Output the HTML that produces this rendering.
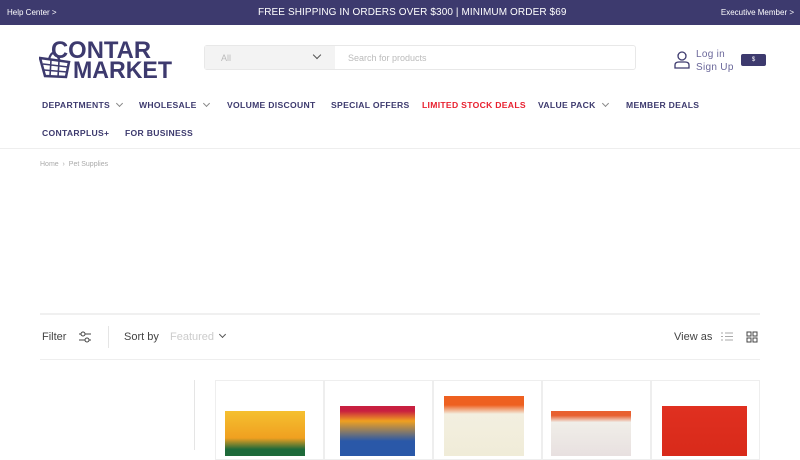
<!DOCTYPE html>
<html><head><meta charset="utf-8"><style>
*{margin:0;padding:0;box-sizing:border-box}
body{width:800px;height:450px;overflow:hidden;background:#fff;font-family:"Liberation Sans",sans-serif;position:relative;color:#3d3a6e}
.a{position:absolute}
.top{left:0;top:0;width:800px;height:25px;background:#3d3a6e;color:#fff}
.nav{font-weight:bold;font-size:8.6px;color:#3d3a6e;letter-spacing:.3px;white-space:nowrap}
.chev{display:inline-block;width:5px;height:5px;border-right:1px solid #888;border-bottom:1px solid #888;transform:rotate(45deg);margin-left:7px;position:relative;top:-2px}
.card{top:380px;width:109px;height:80px;border:1px solid #eee}
</style></head><body>
<div class="a top">
<div class="a" style="left:7px;top:8px;font-size:8px">Help Center &gt;</div>
<div class="a" style="left:258px;top:7px;font-size:10px;letter-spacing:.1px;width:285px;white-space:nowrap">FREE SHIPPING IN ORDERS OVER $300 | MINIMUM ORDER $69</div>
<div class="a" style="right:6px;top:8px;font-size:8px">Executive Member &gt;</div>
</div>
<!-- logo -->
<svg class="a" style="left:39px;top:38px" width="135" height="42" viewBox="0 0 135 42">
<text x="12" y="20" font-family="Liberation Sans" font-weight="bold" font-size="24" fill="#3d3a6e" textLength="100" lengthAdjust="spacingAndGlyphs">CONTAR</text>
<text x="34" y="40" font-family="Liberation Sans" font-weight="bold" font-size="24" fill="#3d3a6e" textLength="99" lengthAdjust="spacingAndGlyphs">MARKET</text>
<path d="M1 20 L30 24 L27 39 L6 38 Z" fill="none" stroke="#3d3a6e" stroke-width="2.5"/>
<path d="M4 26 L29 29 M5 32 L28 34 M12 22 L11 38 M20 23 L19 39" stroke="#3d3a6e" stroke-width="1.6"/>
<path d="M10 21 Q14 8 21 23" fill="none" stroke="#3d3a6e" stroke-width="2.2"/>
</svg>
<div class="a" style="left:204px;top:45px;width:432px;height:25px;border:1px solid #e8e8e8;border-radius:3px"></div>
<div class="a" style="left:205px;top:46px;width:130px;height:23px;background:#f3f3f3"></div>
<div class="a" style="left:221px;top:53px;font-size:9px;color:#bbb">All</div>
<div class="a" style="left:314px;top:52px;width:6px;height:6px;border-right:1.3px solid #555;border-bottom:1.3px solid #555;transform:rotate(45deg)"></div>
<div class="a" style="left:348px;top:53px;font-size:9px;color:#bbb">Search for products</div>
<svg class="a" style="left:673px;top:51px" width="18" height="18" viewBox="0 0 18 18"><circle cx="9" cy="5" r="4" fill="none" stroke="#3d3a6e" stroke-width="1.3"/><path d="M2 17 V14 Q2 11 6 11 H12 Q16 11 16 14 V17 Z" fill="none" stroke="#3d3a6e" stroke-width="1.3"/></svg>
<div class="a" style="left:696px;top:48px;font-size:10px;color:#6a679a;line-height:13px;letter-spacing:.3px">Log in<br>Sign Up</div>
<div class="a" style="left:741px;top:54px;width:25px;height:12px;background:#3d3a6e;border-radius:2px;color:#fff;font-size:6px;text-align:center;line-height:12px">$</div>
<div class="a nav" style="left:42px;top:100px">DEPARTMENTS<span class="chev"></span></div>
<div class="a nav" style="left:139px;top:100px">WHOLESALE<span class="chev"></span></div>
<div class="a nav" style="left:227px;top:100px">VOLUME DISCOUNT</div>
<div class="a nav" style="left:331px;top:100px">SPECIAL OFFERS</div>
<div class="a nav" style="left:422px;top:100px;color:#e8202f">LIMITED STOCK DEALS</div>
<div class="a nav" style="left:538px;top:100px">VALUE PACK<span class="chev"></span></div>
<div class="a nav" style="left:626px;top:100px">MEMBER DEALS</div>
<div class="a nav" style="left:42px;top:128px">CONTARPLUS+</div>
<div class="a nav" style="left:125px;top:128px">FOR BUSINESS</div>
<div class="a" style="left:0;top:148px;width:800px;height:1px;background:#eee"></div>
<div class="a" style="left:40px;top:161px;font-size:7px;color:#aaa">Home &nbsp;›&nbsp; Pet Supplies</div>
<div class="a" style="left:40px;top:313px;width:720px;height:2px;background:#f0f0f0"></div>
<div class="a" style="left:42px;top:331px;font-size:11px;color:#444">Filter</div>
<svg class="a" style="left:78px;top:331px" width="14" height="12" viewBox="0 0 14 12"><path d="M1 3H13M1 9H13" stroke="#444"/><circle cx="5" cy="3" r="2" fill="#fff" stroke="#444"/><circle cx="9" cy="9" r="2" fill="#fff" stroke="#444"/></svg>
<div class="a" style="left:108px;top:326px;width:1px;height:22px;background:#e5e5e5"></div>
<div class="a" style="left:124px;top:331px;font-size:11px;color:#444">Sort by</div>
<div class="a" style="left:170px;top:331px;font-size:11px;color:#ccc">Featured</div>
<div class="a" style="left:220px;top:332px;width:5px;height:5px;border-right:1px solid #555;border-bottom:1px solid #555;transform:rotate(45deg)"></div>
<div class="a" style="left:674px;top:331px;font-size:11px;color:#444">View as</div>
<svg class="a" style="left:721px;top:331px" width="12" height="11"><path d="M0 2H2M4 2H12M0 5.5H2M4 5.5H12M0 9H2M4 9H12" stroke="#aaa"/></svg>
<svg class="a" style="left:746px;top:331px" width="13" height="12"><rect x="1" y="1" width="4" height="4" fill="none" stroke="#444"/><rect x="7" y="1" width="4" height="4" fill="none" stroke="#444"/><rect x="1" y="7" width="4" height="4" fill="none" stroke="#444"/><rect x="7" y="7" width="4" height="4" fill="none" stroke="#444"/></svg>
<div class="a" style="left:40px;top:359px;width:720px;height:1px;background:#eee"></div>
<div class="a" style="left:194px;top:380px;width:1px;height:70px;background:#e5e5e5"></div>
<div class="a card" style="left:215px"><div class="a" style="left:9px;top:30px;width:80px;height:45px;background:linear-gradient(#f5c030,#f0a020 60%,#1e6a3a 85%)"></div></div>
<div class="a card" style="left:324px"><div class="a" style="left:15px;top:25px;width:75px;height:50px;background:linear-gradient(#c82040 10%,#f0a020 30%,#2a58a8 70%)"></div></div>
<div class="a card" style="left:433px"><div class="a" style="left:10px;top:15px;width:80px;height:60px;background:linear-gradient(#ee6020 15%,#f3efe0 30%,#f0ecd8)"></div></div>
<div class="a card" style="left:542px"><div class="a" style="left:8px;top:30px;width:80px;height:45px;background:linear-gradient(#e86030 10%,#f0eee8 25%,#e8e0e0)"></div></div>
<div class="a card" style="left:651px"><div class="a" style="left:10px;top:25px;width:85px;height:50px;background:linear-gradient(#e03020,#d82a1a)"></div></div>
</body></html>
